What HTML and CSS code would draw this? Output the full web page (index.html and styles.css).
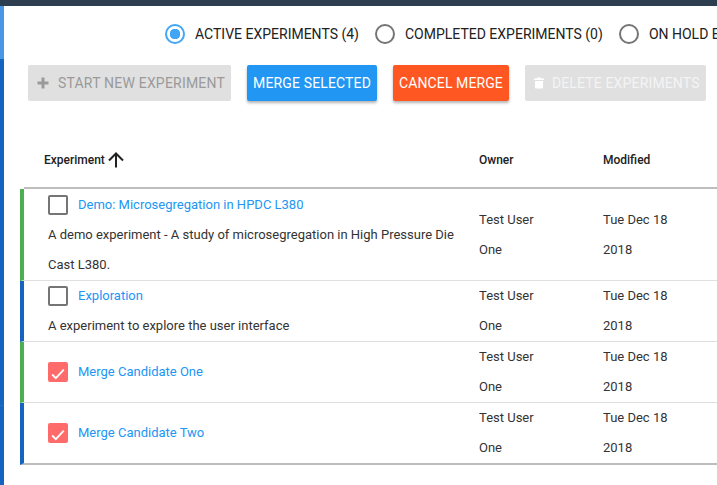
FILE: index.html
```html
<!DOCTYPE html>
<html lang="en">
<head>
    <meta charset="UTF-8">
    <meta name="viewport" content="width=device-width, initial-scale=1.0">
    <title>Experiments</title>
    <link rel="stylesheet" href="styles.css">
</head>
<body>

    <!-- Top bar -->
    <div class="topbar"></div>

    <div class="page">
        <!-- Side strip -->
        <div class="side">
            <div class="side-top"></div>
            <div class="side-mid"></div>
            <div class="side-rest"></div>
        </div>

        <!-- Main Content -->
        <div class="content">
            <div class="radios">
                <label class="radio radio-on"><span class="radio-dot"></span>ACTIVE EXPERIMENTS (4)</label>
                <label class="radio"><span class="radio-dot"></span>COMPLETED EXPERIMENTS (0)</label>
                <label class="radio"><span class="radio-dot"></span>ON HOLD EXPERIMENTS (0)</label>
            </div>

            <div class="actions">
                <button class="btn btn-off btn-start">
                    <svg class="btn-icon" viewBox="0 0 12 12"><path d="M4.500 0.500h3v4h4v3h-4v4h-3v-4h-4v-3h4z" fill="#9a9a9a"/></svg>
                    START NEW EXPERIMENT
                </button>
                <button class="btn btn-blue">MERGE SELECTED</button>
                <button class="btn btn-red">CANCEL MERGE</button>
                <button class="btn btn-off btn-light">
                    <svg class="btn-icon trash" viewBox="0 0 10 12"><path d="M3.500 0.500h3l.5 1h3v1.500H0V1.500h3zM1 4h8v6.500a1 1 0 0 1-1 1H2a1 1 0 0 1-1-1z" fill="#fff"/></svg>
                    DELETE EXPERIMENTS
                </button>
            </div>

            <div class="table">
                <div class="head">
                    <div class="head-cell head-first">Experiment
                        <svg class="sort" viewBox="0 0 16 16"><path d="M8 15.500V2M1 8.500L8 1.500l7 7" fill="none" stroke="#222" stroke-width="2"/></svg>
                    </div>
                    <div class="head-cell">Owner</div>
                    <div class="head-cell">Modified</div>
                </div>

                <div class="row row-green row-tall">
                    <div class="exp">
                        <div class="exp-title"><span class="check"></span><a href="#">Demo: Microsegregation in HPDC L380</a></div>
                        <p class="exp-desc">A demo experiment - A study of microsegregation in High Pressure Die Cast L380.</p>
                    </div>
                    <div class="cell">Test User One</div>
                    <div class="cell">Tue Dec 18 2018</div>
                </div>

                <div class="row row-blue">
                    <div class="exp">
                        <div class="exp-title"><span class="check"></span><a href="#">Exploration</a></div>
                        <p class="exp-desc">A experiment to explore the user interface</p>
                    </div>
                    <div class="cell">Test User One</div>
                    <div class="cell">Tue Dec 18 2018</div>
                </div>

                <div class="row row-green">
                    <div class="exp exp-single">
                        <div class="exp-title">
                            <span class="check check-on"><svg viewBox="0 0 20 20"><path d="M4.200 12.500l3.600 3.600 8-8.500" fill="none" stroke="#fff" stroke-width="1.800"/></svg></span>
                            <a href="#">Merge Candidate One</a>
                        </div>
                    </div>
                    <div class="cell">Test User One</div>
                    <div class="cell">Tue Dec 18 2018</div>
                </div>

                <div class="row row-blue row-last">
                    <div class="exp exp-single">
                        <div class="exp-title">
                            <span class="check check-on"><svg viewBox="0 0 20 20"><path d="M4.200 12.500l3.600 3.600 8-8.500" fill="none" stroke="#fff" stroke-width="1.800"/></svg></span>
                            <a href="#">Merge Candidate Two</a>
                        </div>
                    </div>
                    <div class="cell">Test User One</div>
                    <div class="cell">Tue Dec 18 2018</div>
                </div>
            </div>
        </div>
    </div>

</body>
</html>
```

FILE: styles.css
```css
/* General reset */
* {
    margin: 0;
    padding: 0;
    box-sizing: border-box;
    font-family: Roboto, Arial, sans-serif;
}

body {
    height: 485px;
    overflow: hidden;
    background-color: #fff;
    color: #212121;
}

/* Top bar */
.topbar {
    height: 6px;
    background-color: #2c3e50;
}

.page {
    display: flex;
    height: 479px;
}

/* Side strip */
.side {
    width: 4px;
    flex-shrink: 0;
    display: flex;
    flex-direction: column;
}

.side-top {
    height: 53px;
    background-color: #4a97e8;
}

.side-mid {
    height: 347px;
    background-color: #1565c0;
    border-bottom: 1px solid #2a6db5;
}

.side-rest {
    flex: 1;
    background-color: #1565c0;
}

.content {
    flex: 1;
    min-width: 0;
}

/* Radio row */
.radios {
    display: flex;
    align-items: center;
    height: 27px;
    margin-top: 14px;
    padding-left: 161px;
    gap: 16px;
    white-space: nowrap;
}

.radio {
    display: flex;
    align-items: center;
    gap: 10px;
    font-size: 14px;
    color: #212121;
    flex-shrink: 0;
}

.radio-dot {
    width: 20px;
    height: 20px;
    border: 2px solid #757575;
    border-radius: 50%;
    flex-shrink: 0;
}

.radio-on .radio-dot {
    border-color: #42a5f5;
    background: radial-gradient(circle, #42a5f5 0, #42a5f5 5px, transparent 5.500px);
}

/* Buttons */
.actions {
    display: flex;
    gap: 16px;
    margin-top: 18px;
    padding-left: 24px;
}

.btn {
    display: flex;
    align-items: center;
    justify-content: center;
    height: 36px;
    padding: 0 6px;
    border: none;
    border-radius: 2px;
    font-size: 14px;
    letter-spacing: 0.15px;
    white-space: nowrap;
    flex-shrink: 0;
}

.btn-off {
    background-color: #e0e0e0;
    color: #9a9a9a;
}

.btn-start {
    letter-spacing: 0.2px;
}

.btn-light {
    color: #f4f4f4;
}

.btn-blue {
    background-color: #2196f3;
    color: #fff;
    box-shadow: 0 2px 3px rgba(0, 0, 0, 0.3);
}

.btn-red {
    background-color: #ff5722;
    color: #fff;
    letter-spacing: 0.1px;
    box-shadow: 0 2px 3px rgba(0, 0, 0, 0.3);
}

.btn-icon {
    width: 12px;
    height: 12px;
    margin: 0 9px 0 3px;
}

.trash {
    width: 10px;
    margin-right: 8px;
    margin-left: 3px;
}

/* Table */
.table {
    margin-top: 30px;
    margin-left: 16px;
    font-size: 13px;
    color: #333;
}

.head {
    display: grid;
    grid-template-columns: 455px 124px 1fr;
    align-items: center;
    height: 58px;
    padding-top: 2px;
    font-size: 12px;
    font-weight: 500;
    color: #212121;
    border-bottom: 2px solid #bdbdbd;
    margin-left: 4px;
}

.head-cell {
    display: flex;
    align-items: center;
    gap: 3px;
}

.head-first {
    padding-left: 20px;
}

.sort {
    width: 16px;
    height: 16px;
}

.row {
    display: grid;
    grid-template-columns: 455px 124px 1fr;
    border-left: 4px solid #1565c0;
    border-bottom: 1px solid #e0e0e0;
    min-height: 61px;
}

.row-green {
    border-left-color: #4caf50;
}

.row-tall {
    min-height: 92px;
}

.row-tall .exp-title {
    padding-top: 2px;
}

.row-tall .exp-desc {
    padding-top: 1px;
}

.row-last {
    border-bottom: 2px solid #bdbdbd;
}

.exp {
    padding-left: 24px;
}

.exp-single {
    display: flex;
    align-items: center;
}

.exp-title {
    display: flex;
    align-items: center;
    gap: 10px;
    height: 30px;
}

.exp-title a {
    margin-bottom: 2px;
    color: #2196f3;
    text-decoration: none;
}

.exp-desc {
    line-height: 30px;
    max-width: 412px;
}

.check {
    width: 20px;
    height: 20px;
    border: 2px solid #757575;
    border-radius: 2px;
    flex-shrink: 0;
}

.check-on {
    border: none;
    background-color: #ff6b6b;
}

.check-on svg {
    display: block;
    width: 20px;
    height: 20px;
}

.cell {
    line-height: 30px;
    width: 70px;
    align-self: center;
}
```
